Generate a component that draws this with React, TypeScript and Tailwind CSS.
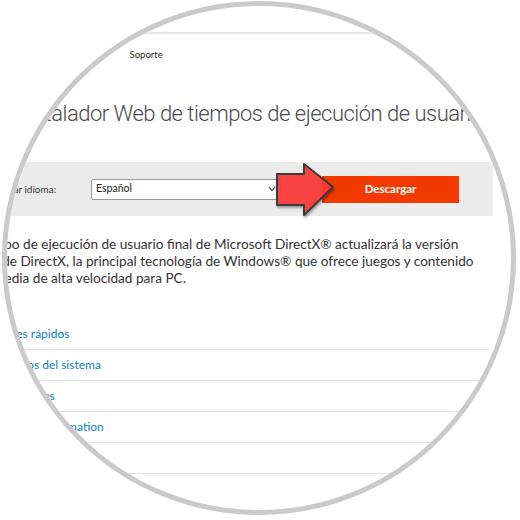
import React from 'react';

const links = ['Detalles rápidos', 'Requisitos del sistema', 'Instrucciones', 'Additional Information', 'Related Resources'];

const DownloadArrow: React.FC = () => (
  <svg width="66" height="60" viewBox="0 0 66 60" className="absolute left-[266px] top-[155px] drop-shadow-[1px_2px_1px_rgba(0,0,0,0.35)]">
    <path
      d="M4 13 L31 13 L31 3 L60 26 L31 54 L31 44 L4 44 Z"
      fill="#ff3b3b"
      fillOpacity="0.92"
      stroke="#3a3a3a"
      strokeWidth="2"
      strokeLinejoin="round"
    />
  </svg>
);

const App: React.FC = () => {
  return (
    <div className="w-[520px] h-[520px] bg-white pl-[2px] pt-[1px] font-['Lato',sans-serif]">
      <div className="relative w-[514px] h-[514px] rounded-full border-[5px] border-[#cacaca] overflow-hidden bg-white">
        <div className="ml-[-50px] w-[546px] text-[#333]">
          {/* top bar */}
          <div className="h-[28px] border-b-2 border-[#e6e6e6]"></div>

          {/* nav */}
          <nav className="h-[42px] flex items-center gap-[24px] pl-[109px] text-[9.5px] text-[#262626]">
            <span>Windows</span>
            <span>Soporte</span>
          </nav>

          {/* title */}
          <h1 className="pt-[22px] h-[86px] pl-[60px] font-['Roboto',sans-serif] text-[22px] leading-[32px] font-light tracking-[-0.5px] text-[#4a4a4a] whitespace-nowrap">
            Instalador Web de tiempos de ejecución de usuario final de DirectX
          </h1>

          {/* language bar */}
          <div className="h-[54px] w-[536px] bg-[#ebebeb] flex items-center pl-[15px]">
            <span className="w-[119px] text-[10px] text-[#333]">Seleccionar idioma:</span>
            <div className="w-[190px] h-[21px] bg-white border border-[#9a9a9a] rounded-[2px] flex items-center justify-between px-[4px] text-[10.5px] text-[#222]">
              <span>Español</span>
              <svg width="8" height="6" viewBox="0 0 8 6">
                <path d="M1 1 L4 4.5 L7 1" fill="none" stroke="#555" strokeWidth="1.2" />
              </svg>
            </div>
            <button className="ml-[41px] w-[137px] h-[27px] bg-[#f23a00] text-white text-[11.5px] font-bold">
              Descargar
            </button>
          </div>

          {/* description */}
          <p className="mt-[20px] pl-[6px] whitespace-nowrap text-[13.6px] leading-[17px] text-[#333]">
            El tiempo de ejecución de usuario final de Microsoft DirectX® actualizará la versión
            <br />
            actual de DirectX, la principal tecnología de Windows® que ofrece juegos y contenido
            <br />
            multimedia de alta velocidad para PC.
          </p>

          {/* sections */}
          <ul className="mt-[32px] w-[533px]">
            {links.map((l) => (
              <li key={l} className="h-[31px] border-b border-[#e2e2e2] flex items-center pl-[28px] text-[12px] text-[#0e7fc4]">
                {l}
              </li>
            ))}
          </ul>
        </div>
        <DownloadArrow />
      </div>
    </div>
  );
};

export default App;
